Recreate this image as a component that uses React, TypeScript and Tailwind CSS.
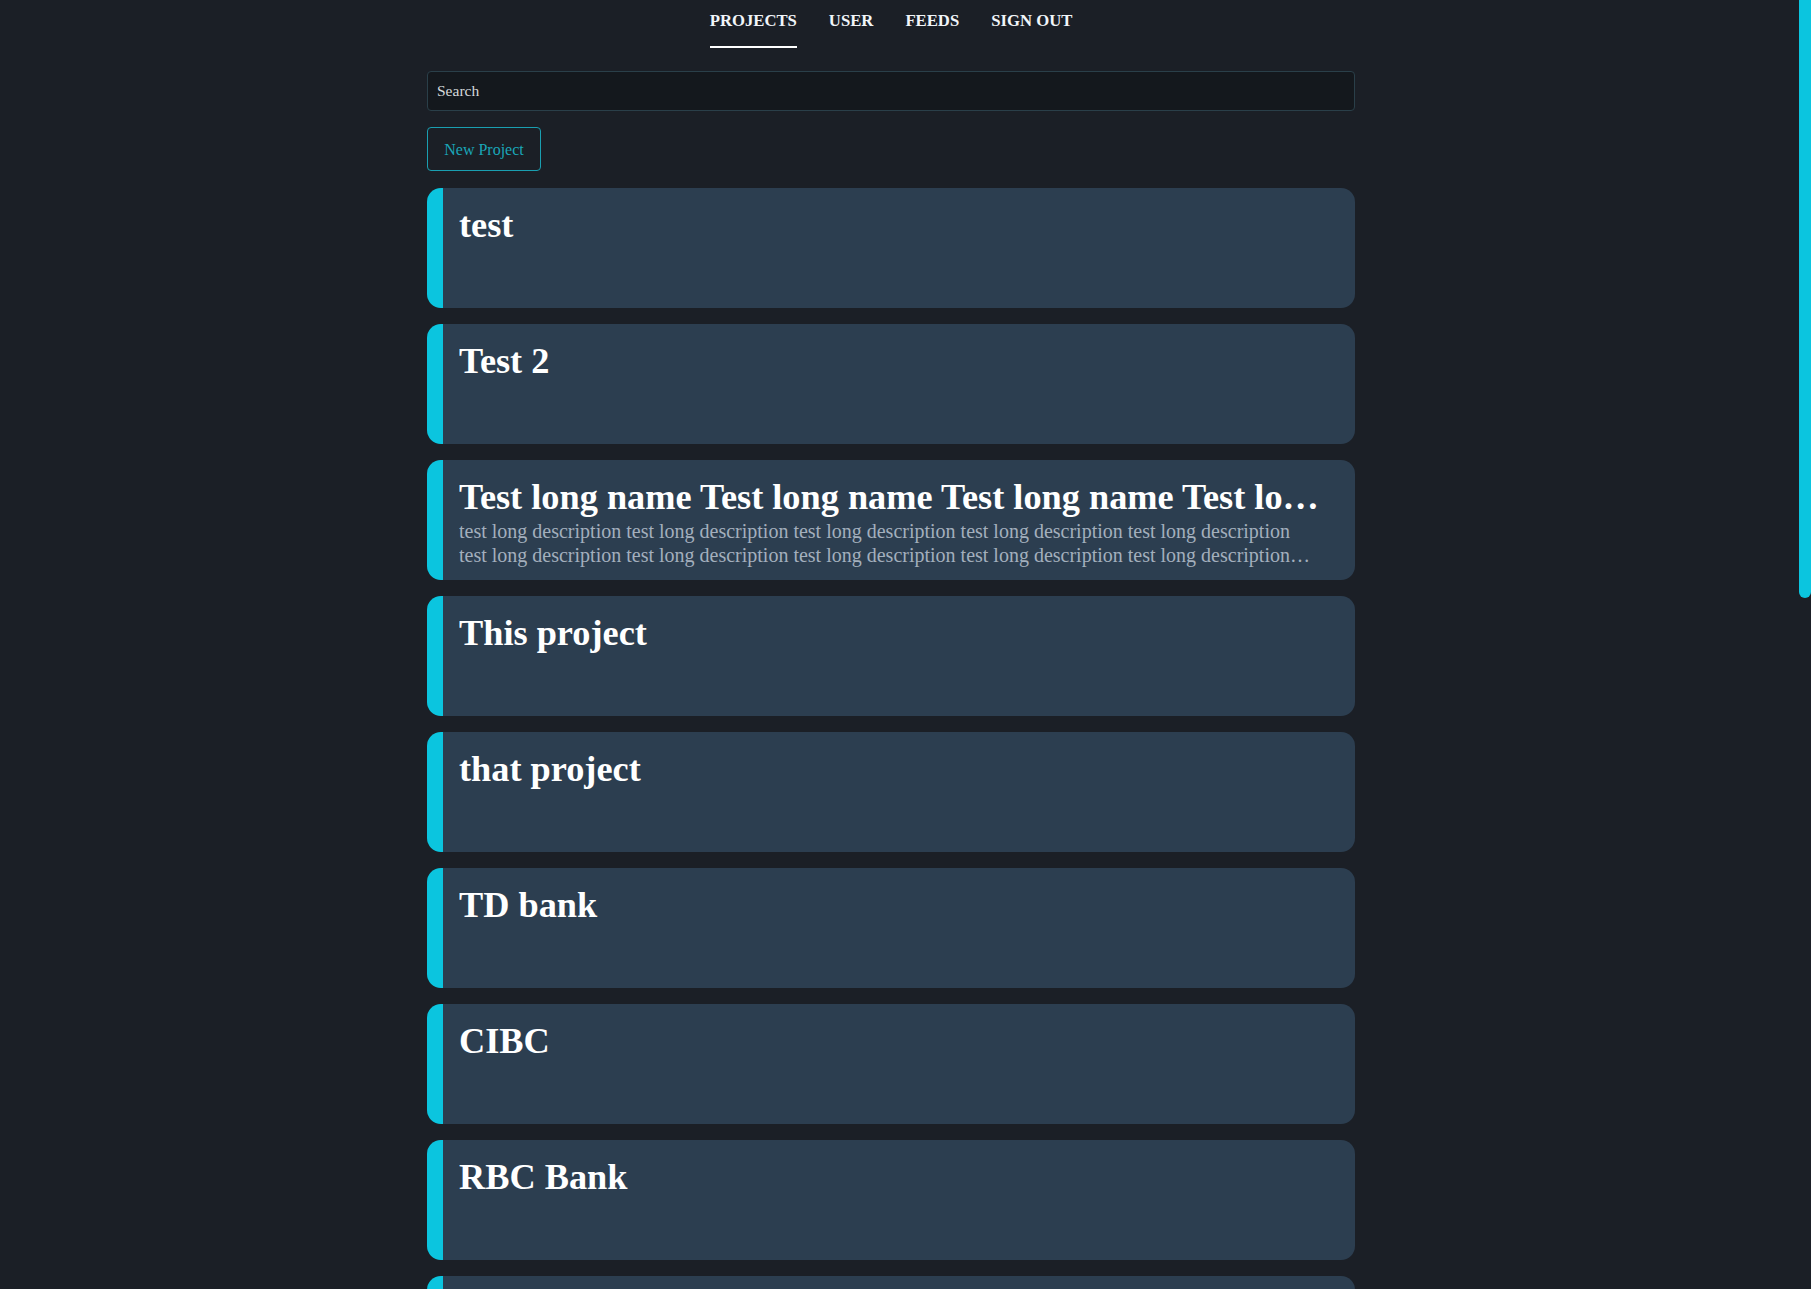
import React from 'react';

const projects = [
  { name: 'test' },
  { name: 'Test 2' },
  {
    name: 'Test long name Test long name Test long name Test long name Test long name',
    description: Array(12).fill('test long description').join(' '),
  },
  { name: 'This project' },
  { name: 'that project' },
  { name: 'TD bank' },
  { name: 'CIBC' },
  { name: 'RBC Bank' },
  { name: 'Scotiabank' },
  { name: 'BMO' },
  { name: 'Desjardins' },
  { name: 'Tangerine' },
  { name: 'National Bank' },
  { name: 'HSBC' },
  { name: 'EQ Bank' },
  { name: 'Simplii' },
  { name: 'Manulife' },
  { name: 'Sun Life' },
  { name: 'Laurentian' },
];

const navItems = ['PROJECTS', 'USER', 'FEEDS', 'SIGN OUT'];

const App = () => {
  return (
    <div
      className="relative h-screen overflow-y-scroll bg-[#1b1f26] text-white [&::-webkit-scrollbar]:w-0"
      style={{ fontFamily: '"Liberation Serif", "Times New Roman", serif' }}
    >
      {/* scrollbar thumb */}
      <div className="fixed right-0 top-0 h-[598px] w-[12px] rounded-b-full bg-[#0bc5df]" />

      <div className="pr-[29px] pb-6">
        <div className="mx-auto w-[928px]">
          {/* Nav */}
          <nav className="flex justify-center gap-8 pt-[11px]">
            {navItems.map((item, i) => (
              <a
                key={item}
                href="#"
                className={`text-[16.7px] font-bold leading-[19px] text-[#f1f5f9] pb-[16px] ${
                  i === 0 ? 'border-b-2 border-white' : 'border-b-2 border-transparent'
                }`}
              >
                {item}
              </a>
            ))}
          </nav>

          {/* Search */}
          <input
            type="text"
            placeholder="Search"
            className="mt-[23px] block w-full h-[40px] rounded-[4px] border border-[#2a3f49] bg-[#14181d] px-[9px] text-[15.5px] text-[#d4d8dc] placeholder:text-[#d4d8dc] outline-none"
          />

          {/* New project */}
          <button className="mt-[16px] h-[44px] w-[114px] rounded-[4px] border border-[#1a9fb1] pt-[2px] text-[16px] text-[#1aa6b8]">
            New Project
          </button>

          {/* Project list */}
          <div className="mt-[17px] flex flex-col gap-[16px]">
            {projects.map((p) => (
              <div
                key={p.name}
                className="h-[120px] overflow-hidden rounded-[14px] border-l-[16px] border-[#0bc5df] bg-[#2c3e50] pl-[16px] pr-[36px] pt-[16px]"
              >
                <h2 className="truncate text-[36.3px] font-bold leading-[42px] text-white">{p.name}</h2>
                {p.description && (
                  <p className="mt-[1px] line-clamp-2 text-[20px] leading-[24px] text-[#a3afbd]">{p.description}</p>
                )}
              </div>
            ))}
          </div>
        </div>
      </div>
    </div>
  );
};

export default App;
